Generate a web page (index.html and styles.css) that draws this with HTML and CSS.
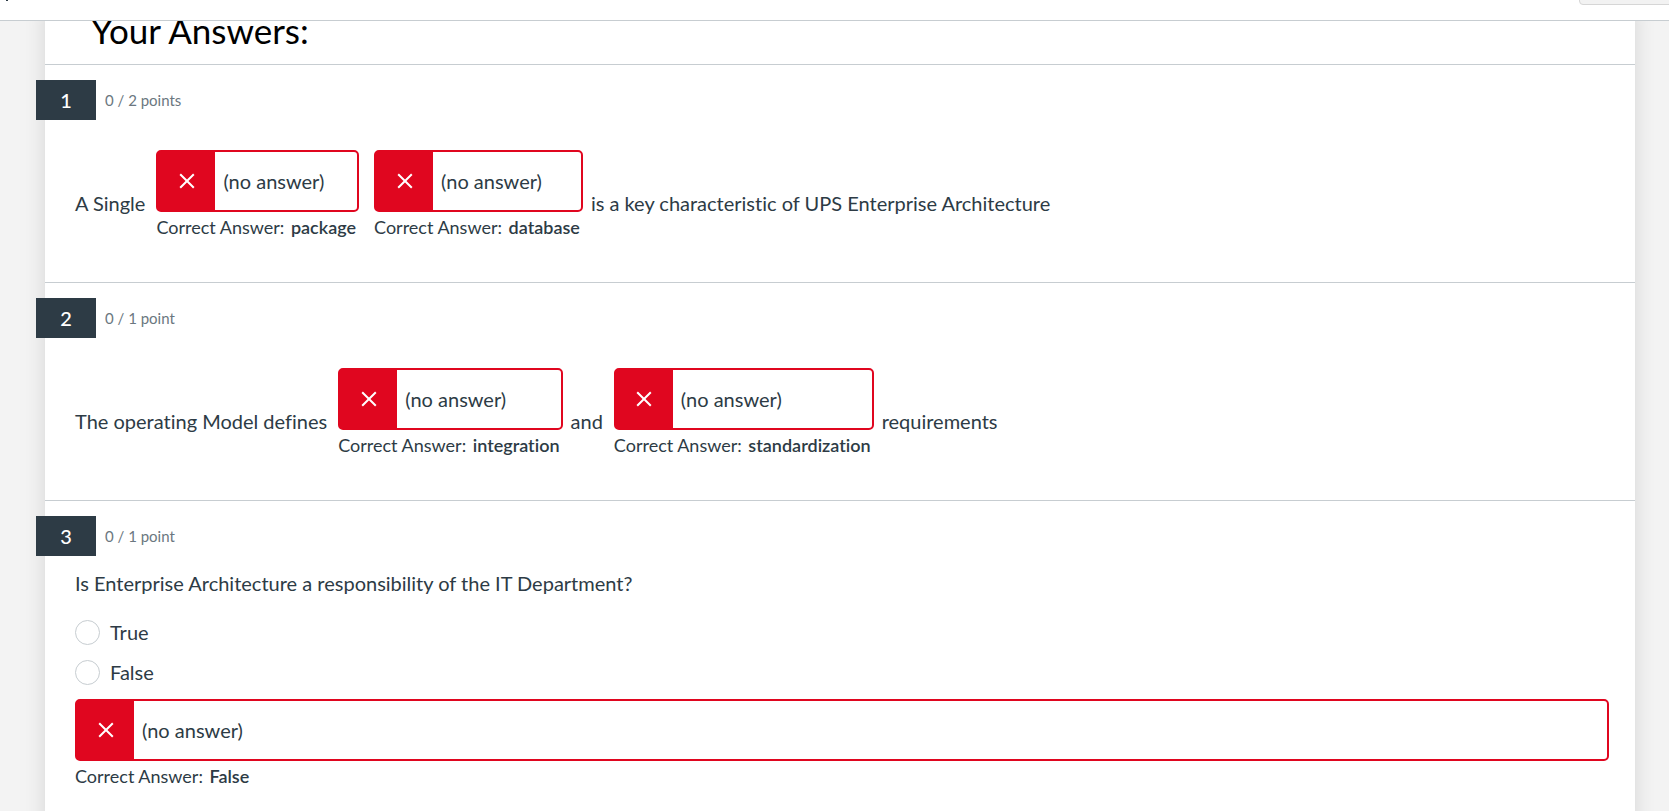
FILE: index.html
```html
<!DOCTYPE html>
<html lang="en">
<head>
<meta charset="utf-8">
<title>Quiz Results</title>
<link rel="stylesheet" href="styles.css">
</head>
<body>
<svg class="defs" aria-hidden="true"><symbol id="cross" viewBox="0 0 16 16"><path d="M1.2 1.2 14.8 14.8M14.8 1.2 1.2 14.8" fill="none" stroke="#fff" stroke-width="2"/></symbol></svg>
<header class="topbar">
  <svg class="mark" viewBox="0 0 4 1" aria-hidden="true"><path d="M1 0h2v1H1z" fill="#2d3b45"/></svg>
  <button class="topbar-button" type="button" aria-label="Close"></button>
</header>
<main class="page">
  <div class="sheet">
    <h1 class="title">Your Answers:</h1>

    <section class="question">
      <div class="question-head"><h2 class="badge">1</h2><span class="points">0 / 2 points</span></div>
      <div class="sentence">
        <span class="words">A Single</span>
        <div class="blank">
          <div class="answer"><span class="status"><svg class="cross"><use href="#cross"/></svg></span><span class="answer-text">(no answer)</span></div>
          <p class="correct">Correct Answer: <strong>package</strong></p>
        </div>
        <div class="blank">
          <div class="answer"><span class="status"><svg class="cross"><use href="#cross"/></svg></span><span class="answer-text">(no answer)</span></div>
          <p class="correct">Correct Answer: <strong>database</strong></p>
        </div>
        <span class="words">is a key characteristic of UPS Enterprise Architecture</span>
      </div>
    </section>

    <section class="question">
      <div class="question-head"><h2 class="badge">2</h2><span class="points">0 / 1 point</span></div>
      <div class="sentence">
        <span class="words">The operating Model defines</span>
        <div class="blank">
          <div class="answer"><span class="status"><svg class="cross"><use href="#cross"/></svg></span><span class="answer-text">(no answer)</span></div>
          <p class="correct">Correct Answer: <strong>integration</strong></p>
        </div>
        <span class="words">and</span>
        <div class="blank">
          <div class="answer"><span class="status"><svg class="cross"><use href="#cross"/></svg></span><span class="answer-text">(no answer)</span></div>
          <p class="correct">Correct Answer: <strong>standardization</strong></p>
        </div>
        <span class="words">requirements</span>
      </div>
    </section>

    <section class="question">
      <div class="question-head"><h2 class="badge">3</h2><span class="points">0 / 1 point</span></div>
      <fieldset class="choices">
        <legend class="prompt">Is Enterprise Architecture a responsibility of the IT Department?</legend>
        <label class="choice"><input class="radio" type="radio" name="q3" value="true">True</label>
        <label class="choice"><input class="radio" type="radio" name="q3" value="false">False</label>
      </fieldset>
      <div class="result">
        <div class="answer"><span class="status"><svg class="cross"><use href="#cross"/></svg></span><span class="answer-text">(no answer)</span></div>
        <p class="correct">Correct Answer: <strong>False</strong></p>
      </div>
    </section>
  </div>
</main>
</body>
</html>
```
FILE: styles.css
```css
* { box-sizing: border-box; }
body {
  margin: 0;
  height: 100vh;
  display: flex;
  flex-direction: column;
  overflow: hidden;
  background: #f3f3f3;
  color: #2d3b45;
  font: 20px/30px Lato, sans-serif;
  font-variant-ligatures: no-common-ligatures;
}
.defs { display: none; }
.topbar {
  flex: none;
  display: flex;
  justify-content: space-between;
  align-items: flex-start;
  height: 21px;
  padding-left: 5px;
  overflow: hidden;
  background: #fff;
  border-bottom: 1px solid #c7cdd1;
}
.mark { width: 4px; height: 1px; }
.topbar-button {
  width: 120px;
  height: 40px;
  margin: -35px -30px 0 0;
  background: #f2f2f2;
  border: 1px solid #d6d6d6;
  border-radius: 4px;
}
.page {
  flex: 1;
  min-height: 0;
  overflow: hidden;
  padding: 0 34px 0 45px;
}
.sheet {
  min-height: 100%;
  background: #fff;
  box-shadow: 0 0 20px rgba(0, 0, 0, 0.12);
}
.title {
  margin: -13px 0 0;
  padding: 0 46px 12px;
  color: #000;
  font-size: 35px;
  font-weight: 400;
  line-height: 44px;
}
.question {
  padding: 15px 26px 40px 30px;
  border-top: 1px solid #c7cdd1;
}
.question-head {
  display: flex;
  align-items: center;
  gap: 9px;
  margin-left: -39px;
}
.badge {
  width: 60px;
  margin: 0;
  background: #2d3b45;
  color: #fff;
  font-size: 20px;
  font-weight: 500;
  line-height: 40px;
  text-align: center;
}
.points { color: #6b7780; font-size: 15px; }
.sentence {
  display: flex;
  flex-wrap: wrap;
  align-items: flex-end;
  margin-top: 30px;
}
.words { margin-bottom: 24px; padding-right: 4px; }
.blank { margin: 0 8px 0 7px; }
.answer {
  display: flex;
  align-items: stretch;
  height: 62px;
  border: 2px solid #e0061f;
  border-radius: 5px;
}
.status {
  display: flex;
  align-items: center;
  justify-content: center;
  width: 57px;
  background: #e0061f;
}
.cross { width: 16px; height: 16px; }
.answer-text { padding-left: 8px; line-height: 58px; }
.correct {
  margin: 0;
  padding-right: 3px;
  font-size: 18px;
  line-height: 30px;
}
.correct strong { margin-left: 2px; font-weight: 600; }
.choices { margin: 0; padding: 0; border: 0; min-width: 0; }
.prompt { padding: 12px 0 19px; }
.choice {
  display: flex;
  align-items: center;
  gap: 10px;
  width: max-content;
  margin-bottom: 10px;
}
.radio {
  appearance: none;
  width: 25px;
  height: 25px;
  margin: 0;
  background: #fff;
  border: 1px solid #c7cdd1;
  border-radius: 50%;
}
.result { padding-top: 2px; }
```
